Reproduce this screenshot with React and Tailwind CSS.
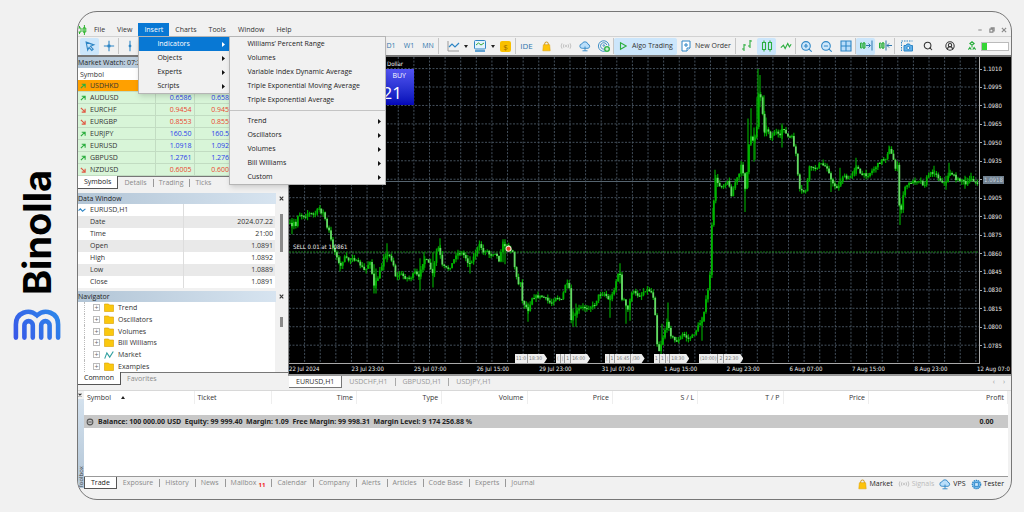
import {
  CircleUserRound,
  Search,
  ZoomIn,
  ZoomOut,
} from 'lucide-react'

const MENU = ['File', 'View', 'Insert', 'Charts', 'Tools', 'Window', 'Help']
const INSERT_ITEMS = ['Indicators', 'Objects', 'Experts', 'Scripts']
const INDICATORS = [
  'Williams’ Percent Range',
  'Volumes',
  'Variable Index Dynamic Average',
  'Triple Exponential Moving Average',
  'Triple Exponential Average',
]
const INDICATOR_GROUPS = ['Trend', 'Oscillators', 'Volumes', 'Bill Williams', 'Custom']

const QUOTES = [
  { symbol: 'USDHKD', bid: '', ask: '', up: true, selected: true },
  { symbol: 'AUDUSD', bid: '0.6586', ask: '0.6589', up: true },
  { symbol: 'EURCHF', bid: '0.9454', ask: '0.9457', up: false },
  { symbol: 'EURGBP', bid: '0.8553', ask: '0.8556', up: false },
  { symbol: 'EURJPY', bid: '160.50', ask: '160.53', up: true },
  { symbol: 'EURUSD', bid: '1.0918', ask: '1.0921', up: true },
  { symbol: 'GBPUSD', bid: '1.2761', ask: '1.2764', up: true },
  { symbol: 'NZDUSD', bid: '0.6005', ask: '0.6008', up: false },
]

const DATA_ROWS = [
  ['Date', '2024.07.22'],
  ['Time', '21:00'],
  ['Open', '1.0891'],
  ['High', '1.0892'],
  ['Low', '1.0889'],
  ['Close', '1.0891'],
]

const TREE = ['Trend', 'Oscillators', 'Volumes', 'Bill Williams', 'Market', 'Examples']

const PRICES = [
  '1.1010', '1.0995', '1.0980', '1.0965', '1.0950', '1.0935', '1.0920', '1.0905',
  '1.0890', '1.0875', '1.0860', '1.0845', '1.0830', '1.0815', '1.0800', '1.0785',
]
const TIMES = [
  '22 Jul 2024', '23 Jul 23:00', '25 Jul 07:00', '26 Jul 15:00', '29 Jul 23:00', '31 Jul 07:00',
  '1 Aug 15:00', '2 Aug 23:00', '6 Aug 07:00', '7 Aug 15:00', '8 Aug 23:00',
]

const EVENTS = [
  { at: 226, parts: ['11:0', '18:30'] },
  { at: 267, parts: ['(', '|', '1', '16:00'] },
  { at: 316, parts: ['|', '1', '16:45', '/30'] },
  { at: 365, parts: ['1', '1', '|', '18:30'] },
  { at: 410, parts: ['(10:00)', '2', '22:30'] },
]

const TRADE_COLUMNS = [
  { name: 'Symbol', cls: 'w-[110px] text-left' },
  { name: 'Ticket', cls: 'w-[77px] text-left' },
  { name: 'Time', cls: 'text-right' },
  { name: 'Type', cls: 'text-right' },
  { name: 'Volume', cls: 'text-right' },
  { name: 'Price', cls: 'text-right' },
  { name: 'S / L', cls: 'text-right' },
  { name: 'T / P', cls: 'text-right' },
  { name: 'Price', cls: 'text-right' },
  { name: 'Profit', cls: 'w-[139px] text-right' },
]
const TOOLBOX_TABS = [
  'Exposure', 'History', 'News', 'Mailbox', 'Calendar', 'Company',
  'Alerts', 'Articles', 'Code Base', 'Experts', 'Journal',
]

// Price track in plot units (690 x 304)
const TRACK = [
  [0, 165], [3, 169], [5, 164], [7, 168], [9, 156], [12, 157], [16, 158], [19, 155], [22, 156],
  [26, 156], [30, 150], [32, 154], [35, 155], [38, 170], [41, 174], [42, 182], [45, 192], [48, 198],
  [51, 210], [55, 199], [60, 202], [63, 198], [67, 203], [71, 206], [76, 213], [81, 202], [85, 228],
  [89, 219], [94, 204], [95, 196], [101, 198], [104, 204], [107, 220], [111, 215], [116, 219],
  [121, 220], [126, 214], [131, 221], [132, 208], [136, 200], [140, 206], [144, 217], [147, 194],
  [150, 189], [153, 207], [157, 210], [160, 210], [164, 204], [167, 196], [172, 194], [176, 198],
  [180, 206], [184, 200], [189, 189], [192, 185], [193, 196], [197, 191], [201, 197], [206, 194],
  [210, 202], [213, 187], [216, 187], [220, 189], [224, 194], [226, 212], [229, 226], [232, 222],
  [233, 242], [236, 246], [239, 252], [243, 239], [246, 238], [254, 238], [262, 245], [267, 238],
  [273, 242], [276, 226], [280, 226], [282, 262], [285, 257], [291, 249], [298, 249], [305, 247],
  [310, 236], [316, 235], [320, 242], [324, 235], [327, 223], [330, 212], [332, 222], [333, 240],
  [336, 242], [338, 255], [341, 242], [343, 232], [347, 236], [352, 237], [356, 231], [361, 232],
  [364, 236], [367, 262], [368, 284], [370, 292], [373, 282], [377, 267], [379, 262], [381, 275],
  [386, 282], [389, 282], [394, 275], [399, 280], [404, 277], [408, 270], [411, 264], [413, 262],
  [416, 247], [420, 227], [422, 202], [423, 162], [425, 142], [427, 116], [429, 128], [434, 128],
  [439, 122], [442, 138], [446, 125], [450, 117], [453, 105], [455, 122], [457, 137], [459, 92],
  [462, 80], [465, 84], [468, 67], [470, 32], [473, 47], [475, 74], [479, 72], [482, 81], [486, 73],
  [491, 80], [494, 68], [498, 79], [503, 80], [507, 97], [510, 132], [514, 134], [517, 132],
  [521, 107], [525, 112], [531, 106], [539, 110], [543, 126], [549, 130], [554, 118], [559, 122],
  [564, 114], [568, 107], [571, 117], [579, 117], [586, 110], [592, 103], [597, 100], [600, 91],
  [604, 100], [607, 112], [609, 107], [610, 147], [612, 154], [614, 137], [617, 128], [623, 124],
  [631, 122], [635, 128], [639, 117], [645, 114], [651, 122], [657, 126], [660, 114], [663, 116],
  [668, 122], [673, 122], [677, 127], [682, 120], [689, 127],
]

// Long wicks: x, top, bottom
const SPIKES = [
  [3, 160, 176], [31, 147, 154], [51, 198, 213], [85, 206, 235], [87, 210, 235], [98, 185, 204],
  [131, 200, 232], [135, 194, 212], [144, 194, 229], [151, 180, 197], [181, 198, 215],
  [214, 181, 204], [216, 181, 206], [239, 244, 263], [284, 250, 268], [287, 245, 268],
  [321, 236, 259], [331, 205, 225], [337, 245, 265], [341, 240, 262], [379, 244, 266],
  [373, 265, 286], [413, 258, 282], [424, 150, 162], [426, 112, 140], [456, 118, 154],
  [459, 61, 130], [462, 51, 84], [465, 70, 104], [466, 78, 102], [468, 40, 70], [469, 12, 60],
  [471, 18, 50], [475, 38, 74], [477, 60, 76], [493, 66, 90], [542, 118, 134], [551, 110, 126],
  [567, 100, 118], [600, 88, 96], [611, 140, 167], [645, 108, 116], [657, 118, 132],
  [660, 105, 120], [676, 118, 131], [682, 115, 124],
]

function buildCandles() {
  let seed = 7
  const rnd = () => {
    seed = (seed * 16807) % 2147483647
    return seed / 2147483647
  }
  const candles = []
  let k = 0
  let prev = TRACK[0][1]
  for (let x = 1; x < 689; x += 1.953) {
    while (k < TRACK.length - 2 && TRACK[k + 1][0] < x) k++
    const [x0, y0] = TRACK[k]
    const [x1, y1] = TRACK[k + 1]
    const close = y0 + ((y1 - y0) * (x - x0)) / (x1 - x0) + (rnd() - 0.5) * 3
    const top = Math.min(prev, close)
    const bottom = Math.max(prev, close)
    candles.push({
      x,
      top,
      bottom: Math.max(bottom, top + 1),
      high: top - rnd() * 4,
      low: bottom + rnd() * 4,
      bear: close > prev,
    })
    prev = close
  }
  return candles
}

const CANDLES = buildCandles()

function Sep() {
  return <span className="h-4 w-px shrink-0 bg-[#c6c6c6]" />
}

function Tool({ label, active, className = 'w-[19px]', children }) {
  return (
    <button
      aria-label={label}
      className={`h-[17px] shrink-0 flex items-center justify-center rounded-xs ${className} ${active ? 'bg-[#cce6fb]' : ''}`}
    >
      {children}
    </button>
  )
}

function Caret() {
  return (
    <svg viewBox="0 0 4 3" className="w-1 h-[3px] shrink-0">
      <path d="M0 0h4L2 3z" fill="#222" />
    </svg>
  )
}

function MenuArrow({ light }) {
  return (
    <svg viewBox="0 0 3 5" className="w-[3px] h-[5px]">
      <path d="M0 0l3 2.5L0 5z" fill={light ? '#fff' : '#111'} />
    </svg>
  )
}

function BagIcon() {
  return (
    <svg viewBox="1 0 10 12" className="w-[9px] h-[11px] shrink-0">
      <path d="M4 5V3a2 2 0 0 1 4 0v2" fill="none" stroke="#c98a00" />
      <path d="M2.5 4h7l.6 6.8H1.9z" fill="#fdc30a" stroke="#e0a000" strokeWidth=".6" />
    </svg>
  )
}

function CloudIcon() {
  return (
    <svg viewBox="0 0 12 12" className="w-3 h-3 shrink-0" fill="#b9defa" stroke="#2f86c5" strokeWidth=".9">
      <path d="M3.2 8.3a2.2 2.2 0 0 1-.3-4.4A3.2 3.2 0 0 1 9 4.2a2.1 2.1 0 0 1 0 4.1z" />
      <path d="M6 6.5v4.2M3.5 10.8h5" fill="none" />
    </svg>
  )
}

function SignalIcon() {
  return (
    <svg viewBox="0 0 12 12" className="w-3 h-3 shrink-0" fill="none" stroke="#bdbdbd" strokeWidth=".9">
      <circle cx="6" cy="6" r=".8" />
      <path d="M4 4.2a3 3 0 0 0 0 3.6M8 4.2a3 3 0 0 1 0 3.6M2 3.3a5 5 0 0 0 0 5.4M10 3.3a5 5 0 0 1 0 5.4" />
    </svg>
  )
}

function Stroke({ d, color = '#2f86c5', className = 'w-3.5 h-3.5', fill = 'none' }) {
  return (
    <svg viewBox="0 0 14 14" className={className} fill={fill} stroke={color} strokeWidth="1.1">
      <path d={d} vectorEffect="non-scaling-stroke" />
    </svg>
  )
}

function Brand() {
  return (
    <aside className="w-[77px] pr-[3px] shrink-0 flex flex-col items-center justify-center gap-3.5">
      <h1 className="[writing-mode:vertical-rl] rotate-180 font-['Inter','Liberation_Sans',sans-serif] text-[38px] leading-[44px] font-bold text-black">
        Binolla
      </h1>
      <svg viewBox="0 0 48 32" className="w-12 h-8" fill="none" strokeWidth="4.6" strokeLinecap="round">
        <defs>
          <linearGradient id="brand" x1="0" y1="32" x2="48" y2="0" gradientUnits="userSpaceOnUse">
            <stop offset="0" stopColor="#3a55e8" />
            <stop offset="1" stopColor="#2b8bea" />
          </linearGradient>
        </defs>
        <g stroke="url(#brand)">
          <path d="M2.9 28.6V15.5C2.9 3.5 16 -.8 24 6.4 32 -.8 45.1 3.5 45.1 15.5V28.6" />
          <path d="M11.4 28.6V16.3a4.1 4.1 0 0 1 8.4 0V28.6" />
          <path d="M28.2 28.6V16.3a4.1 4.1 0 0 1 8.4 0V28.6" />
        </g>
      </svg>
    </aside>
  )
}

function InsertMenu() {
  return (
    <div className="absolute z-20 left-0 top-full w-[92px] bg-[#f1f1f1] border border-[#b5b5b5] shadow-md text-[#222]">
      {INSERT_ITEMS.map((item, i) => (
        <button
          key={item}
          className={`w-full h-3.5 flex items-center justify-between pl-[18px] pr-1 ${i === 0 ? 'bg-[#0878d4] text-white' : ''}`}
        >
          {item}
          <MenuArrow light={i === 0} />
        </button>
      ))}
      <div className="absolute left-full -top-px w-[157px] bg-[#f1f1f1] border border-[#b5b5b5] shadow-md">
        {INDICATORS.map((item) => (
          <button key={item} className="w-full h-3.5 flex items-center pl-[17px] whitespace-nowrap">
            {item}
          </button>
        ))}
        <hr className="my-[3px] border-[#c4c4c4]" />
        {INDICATOR_GROUPS.map((item) => (
          <button key={item} className="w-full h-3.5 flex items-center justify-between pl-[17px] pr-1">
            {item}
            <MenuArrow />
          </button>
        ))}
      </div>
    </div>
  )
}

function MenuBar() {
  return (
    <div className="pt-[11px] flex items-center justify-between">
      <nav className="flex items-center h-[13px]">
        <svg viewBox="0 0 9 10" className="w-[9px] h-2.5 mr-px" fill="none" stroke="#2eb52e">
          <path d="M.5 3h2.5v4H.5M6.2 2v6M5 3h2.8v4H5zM6.4 0v3M6.4 7v3M1.5 1v2M1.5 7v2" />
        </svg>
        {MENU.map((item) => (
          <div key={item} className="relative">
            <button className={`h-[13px] px-1.5 flex items-center ${item === 'Insert' ? 'bg-[#0878d4] text-white' : 'text-[#333]'}`}>
              {item}
            </button>
            {item === 'Insert' && <InsertMenu />}
          </div>
        ))}
      </nav>
      <div className="flex gap-1.5 pr-1">
        <Stroke d="M3 7h8" color="#888" className="w-1.5 h-2" />
        <Stroke d="M2 5h7v7H2zM5 5V2h7v7H9" color="#888" className="w-1.5 h-2" />
        <Stroke d="M2 2l10 10M12 2L2 12" color="#888" className="w-1.5 h-2" />
      </div>
    </div>
  )
}

function Toolbar() {
  return (
    <div className="h-[21px] flex items-center border-t border-[#d2d2d2] border-b-2 border-b-[#777] px-0.5 text-[#333]">
      <Tool label="Cursor" active>
        <Stroke d="M2.5 2.5l9 3.2-4 1.6 3.2 3.4-1.6 1.5-3.2-3.4-1.6 3z" className="w-3 h-3" />
      </Tool>
      <Tool label="Crosshair"><Stroke d="M7 1v12M1 7h12M5.5 7a1.5 1.5 0 1 0 3 0 1.5 1.5 0 0 0-3 0" className="w-3 h-3" /></Tool>
      <Sep />
      <Tool label="Vertical line" className="w-[22px]"><Stroke d="M7 1v12M6 7a1 1 0 1 0 2 0 1 1 0 0 0-2 0" className="w-3 h-3" /></Tool>
      <span className="w-[241px] shrink-0" />
      <Tool label="Daily" className="w-[18px] text-[#2f77ad]">D1</Tool>
      <Tool label="Weekly" className="w-[18px] text-[#2f77ad]">W1</Tool>
      <Tool label="Monthly" className="w-5 text-[#2f77ad]">MN</Tool>
      <Sep />
      <Tool label="Line studies" className="w-8 gap-1 pl-1">
        <svg viewBox="0 0 14 14" className="w-3.5 h-3.5" fill="none">
          <path d="M2 2v10h11" stroke="#999" />
          <path d="M3 8l3-3 3 3 4-4" stroke="#2f86c5" strokeWidth="1.2" />
        </svg>
        <Caret />
      </Tool>
      <Tool label="Templates" className="w-[25px] gap-1">
        <svg viewBox="0 0 14 14" className="w-3.5 h-3.5">
          <rect x="1.5" y="1.5" width="11" height="8.5" rx="1" fill="#e4f3fd" stroke="#2f86c5" />
          <path d="M3 6l2.5-2 2.5 2L11 4" fill="none" stroke="#38a838" />
          <path d="M2 12h10" stroke="#2f86c5" strokeWidth="1.4" />
        </svg>
        <Caret />
      </Tool>
      <Tool label="Deposit">
        <span className="w-[11px] h-[11px] rounded-xs bg-[#f8c000] text-[8px] leading-[11px] text-[#9a6a00] text-center">$</span>
      </Tool>
      <Sep />
      <Tool label="IDE" className="w-[21px] text-[8px] text-[#2f77ad]">IDE</Tool>
      <Tool label="Market"><BagIcon /></Tool>
      <Tool label="Signals"><SignalIcon /></Tool>
      <Tool label="Virtual hosting"><CloudIcon /></Tool>
      <Tool label="Community">
        <svg viewBox="0 0 14 14" className="w-3.5 h-3.5" fill="none" stroke="#3f8fc6">
          <path d="M10 11.2A5.3 5.3 0 1 1 12 7M9 9.2A3.2 3.2 0 1 1 9.8 6" />
          <circle cx="6.8" cy="6.5" r=".8" />
          <circle cx="10" cy="10" r="3" fill="#31b54a" stroke="none" />
          <path d="M8.3 10h3.4M10 8.3v3.4" stroke="#fff" />
        </svg>
      </Tool>
      <Sep />
      <Tool label="Algo Trading" active className="w-[63px] gap-1">
        <Stroke d="M3.5 2.5l8 4.5-8 4.5z" color="#2cae3f" className="w-2.5 h-2.5" />
        Algo Trading
      </Tool>
      <Tool label="New Order" className="w-[58px] gap-1">
        <svg viewBox="0 0 10 12" className="w-2.5 h-3" fill="#fff" stroke="#2f86c5">
          <path d="M1 1h8v7l-3 3H1z" />
          <path d="M3 5h4M5 3v4M6 11V8h3" />
        </svg>
        New Order
      </Tool>
      <Sep />
      <Tool label="Bar chart" className="w-[21px]"><Stroke d="M4 5v7M2 10h2M4 6h2M10 1v8M8 7h2M10 2h2" color="#2cae3f" /></Tool>
      <Tool label="Candlesticks" active><Stroke d="M2.5 3.5h3v7h-3zM8.5 3.5h3v7h-3zM4 1.5v2M4 10.5v2M10 1.5v2M10 10.5v2" color="#2cae3f" /></Tool>
      <Tool label="Line chart"><Stroke d="M1 9l3-3 2 4 3-6 2 4 2-3" color="#2cae3f" className="w-3 h-3" /></Tool>
      <Sep />
      <Tool label="Zoom in" className="w-[21px]"><ZoomIn size={13} color="#2f86c5" fill="#cfe8fb" /></Tool>
      <Tool label="Zoom out"><ZoomOut size={13} color="#2f86c5" fill="#cfe8fb" /></Tool>
      <Tool label="Tile windows"><Stroke d="M2 2h10v10H2zM7 2v10M2 7h10" fill="#b9defa" /></Tool>
      <Sep />
      <Tool label="Auto scroll" active>
        <svg viewBox="0 0 14 14" className="w-3.5 h-3.5" fill="none">
          <path d="M1.5 4h1.5v5H1.5zM5 3v7M4 4h2v5H4z" stroke="#2cae3f" />
          <path d="M7 6.5h4M9.5 4.5l2 2-2 2M13 1.5v10" stroke="#2f77ad" />
        </svg>
      </Tool>
      <Tool label="Chart shift">
        <svg viewBox="0 0 14 14" className="w-3.5 h-3.5" fill="none">
          <path d="M1.5 4h1.5v5H1.5zM5 3v7M4 4h2v5H4z" stroke="#2cae3f" />
          <path d="M9 6.5h5M11 4.5l-2 2 2 2M8 1.5v10" stroke="#2f77ad" />
        </svg>
      </Tool>
      <Sep />
      <Tool label="Screenshot" className="w-[23px]">
        <svg viewBox="0 0 14 14" className="w-3.5 h-3.5" fill="none" stroke="#2f86c5">
          <path d="M1.5 12V2h11" strokeDasharray="1.5 1" />
          <path d="M4 6.5h2l1-1.5h2.5l1 1.5h2V12H4z" fill="#5fb0ea" />
          <circle cx="8.3" cy="9" r="1.5" fill="#fff" />
        </svg>
      </Tool>
      <Tool label="Search"><Search size={10} color="#333" strokeWidth={2.5} /></Tool>
      <Tool label="Account" className="w-[25px]"><CircleUserRound size={10} color="#333" strokeWidth={2.5} /></Tool>
      <Tool label="Connection">
        <Stroke d="M7 1l3 2.5-3 2.5-3-2.5zM7 6v3M2 12l2-3 2 3M8 12l2-3 2 3" color="#2cae3f" className="w-2.5 h-3" />
      </Tool>
      <div className="flex-1 h-[9px] border border-[#bbb] bg-white">
        <div className="w-[5px] h-full bg-[#36d636]" />
      </div>
    </div>
  )
}

function PanelTitle({ children }) {
  return (
    <div className="flex items-center justify-between pr-0.5">
      <h2 className="flex-1 h-[11px] leading-[11px] bg-linear-to-r from-[#b2c5d6] to-[#d7e4f0] text-[#222]">{children}</h2>
      <button aria-label="Close" className="w-2.5 h-2.5 flex items-center justify-center">
        <Stroke d="M2 2l10 10M12 2L2 12" color="#333" className="w-[5px] h-[5px]" />
      </button>
    </div>
  )
}

function Tabs({ active, items }) {
  return (
    <div className="flex items-start gap-px h-[14px] border-t border-[#777] text-[#8a8a8a]">
      <button className="-mt-px h-[13px] px-1.5 bg-white border-r border-b border-[#555] text-[#222]">{active}</button>
      {items.map((item, i) => (
        <button key={item} className="h-3 flex items-center">
          {i > 0 && <span className="h-2 w-px bg-[#999]" />}
          <span className="px-[5px]">{item}</span>
        </button>
      ))}
    </div>
  )
}

function MarketWatch() {
  return (
    <section>
      <PanelTitle>Market Watch: 07:2</PanelTitle>
      <table className="w-full table-fixed border-collapse leading-[11px]">
        <thead>
          <tr className="h-3 bg-white">
            <th className="w-[77px] p-0 pl-0.5 text-left font-normal text-[#333]">Symbol</th>
            <th className="w-[39px] p-0" />
            <th className="w-[39px] p-0" />
            <th className="p-0" />
          </tr>
        </thead>
        <tbody>
          {QUOTES.map((q) => (
            <tr key={q.symbol} className={`border-b border-[#c2dcc2] ${q.selected ? 'bg-[#ffa000]' : 'bg-[#d8f5d8]'}`}>
              <td className="p-0 text-[#333]">
                <span className="flex items-center gap-1 pl-0.5">
                  <Stroke
                    d={q.up ? 'M2 12L11 3M4 3h8v8' : 'M2 2l9 9M4 12h8V4'}
                    color={q.up ? '#2cae3f' : '#e05540'}
                    className="w-1.5 h-1.5"
                  />
                  {q.symbol}
                </span>
              </td>
              <td className={`p-0 pr-0.5 text-right border-l border-[#c2dcc2] ${q.up ? 'text-[#2a40ea]' : 'text-[#ea4530]'}`}>{q.bid}</td>
              <td className={`p-0 text-right border-l border-[#c2dcc2] ${q.up ? 'text-[#2a40ea]' : 'text-[#ea4530]'}`}>{q.ask}</td>
              <td className="p-0" />
            </tr>
          ))}
        </tbody>
      </table>
      <Tabs active="Symbols" items={['Details', 'Trading', 'Ticks']} />
    </section>
  )
}

function DataWindow() {
  return (
    <section>
      <PanelTitle>Data Window</PanelTitle>
      <div className="flex">
        <table className="flex-1 table-fixed border-collapse bg-white text-[#333]">
          <tbody>
            <tr className="h-3">
              <th className="w-[105px] p-0 text-left font-normal border-r border-[#ddd]">
                <span className="flex items-center gap-1">
                  <Stroke d="M1 8l3-3 4 4 5-4" className="w-2 h-2" />
                  EURUSD,H1
                </span>
              </th>
              <td className="p-0" />
            </tr>
            {DATA_ROWS.map(([name, value]) => (
              <tr key={name} className="h-3 odd:bg-white even:bg-[#e9e9e9]">
                <th className="w-[105px] p-0 pl-3 text-left font-normal border-r border-[#ddd]">{name}</th>
                <td className="p-0 pr-0.5 text-right">{value}</td>
              </tr>
            ))}
          </tbody>
        </table>
        <div className="w-[13px] flex justify-center pt-2.5">
          <span className="w-[3px] h-[38px] bg-[#8a8a8a]" />
        </div>
      </div>
    </section>
  )
}

function Navigator() {
  return (
    <section className="flex-1 flex flex-col">
      <PanelTitle>Navigator</PanelTitle>
      <div className="flex-1 flex">
        <ul className="flex-1 flex flex-col pl-1.5 bg-white leading-[11px] text-[#333]">
          {TREE.map((item) => (
            <li key={item} className="flex-1 flex items-center gap-1 border-l border-dotted border-[#bbb] pl-2">
              <span className="w-[7px] h-[7px] text-[7px] leading-[6px] text-center border border-[#bbb] text-[#666]">+</span>
              {item === 'Market' ? (
                <Stroke d="M1 12l3-8 4 6 5-8" className="w-2.5 h-2.5" color="#2f9f9f" />
              ) : (
                <svg viewBox="0 0 10 9" className="w-2.5 h-[9px]">
                  <path d="M.5 1h4l1 1h4v6.5h-9z" fill="#fac80f" stroke="#d99e00" strokeWidth=".6" />
                </svg>
              )}
              {item}
            </li>
          ))}
        </ul>
        <div className="w-[13px] flex justify-center pt-[15px]">
          <span className="w-[3px] h-2.5 bg-[#8a8a8a]" />
        </div>
      </div>
      <Tabs active="Common" items={['Favorites']} />
    </section>
  )
}

function Plot() {
  const columns = Array.from({ length: 45 }, (_, i) => i * 15.61)
  const rows = PRICES.map((_, i) => 11.5 + i * 18.32)
  return (
    <svg viewBox="0 0 690 304" preserveAspectRatio="none" className="absolute inset-0 w-full h-full">
      <g stroke="#4a5865" strokeWidth=".9" strokeDasharray="2 1.5">
        {columns.map((x) => <path key={x} d={`M${x} 0V304`} />)}
        {rows.map((y) => <path key={y} d={`M0 ${y}H690`} />)}
      </g>
      <path d="M0 123.7H690" stroke="#56646f" />
      <path d="M0 193.7H690" stroke="#188018" strokeDasharray="2 1" />
      <g stroke="#00a400" strokeWidth="1.2">
        {SPIKES.map(([x, top, bottom]) => <path key={`${x}-${top}`} d={`M${x} ${top}V${bottom}`} />)}
        {CANDLES.map((c) => <path key={c.x} d={`M${c.x} ${c.high}V${c.low}`} />)}
      </g>
      {CANDLES.map((c) => (
        <rect key={c.x} x={c.x - 0.9} y={c.top} width="1.8" height={c.bottom - c.top} fill={c.bear ? '#66d866' : '#00b400'} />
      ))}
      <circle cx="219.5" cy="190.5" r="3" fill="#f5e6d8" />
      <circle cx="219.5" cy="190.5" r="2" fill="#e0442a" />
    </svg>
  )
}

function Chart() {
  return (
    <section className="flex-1 min-w-0 flex flex-col">
      <div className="flex-1 flex flex-col bg-black border-l border-[#888] border-b-2 border-b-[#999] font-['DejaVu_Sans_Condensed','DejaVu_Sans',sans-serif] text-[6px] leading-[8px] text-[#eee]">
        <div className="flex-1 flex">
          <div className="relative flex-1 overflow-hidden border-r border-b border-[#aaa]">
            <Plot />
            <p className="absolute left-[98px] top-[3px]">Dollar</p>
            <button className="absolute left-[84px] top-3 w-[41px] h-9 flex flex-col items-end pr-2 bg-linear-to-b from-[#5353f2] to-[#0505b8] font-['Open_Sans',sans-serif] text-white">
              <span className="text-[7px] leading-[13px]">BUY</span>
              <span className="pr-1 text-[17px] leading-[22px]">21</span>
            </button>
            <p className="absolute left-1 top-[186px]">SELL 0.01 at 1.0861</p>
            {EVENTS.map((e) => (
              <div
                key={e.at}
                className="absolute bottom-0 flex h-[9px] pr-1 bg-[#eee] text-[5px] leading-[9px] text-[#777] divide-x divide-[#999] [clip-path:polygon(0_0,calc(100%-3px)_0,100%_50%,calc(100%-3px)_100%,0_100%)]"
                style={{ left: `${(e.at / 690) * 100}%` }}
              >
                {e.parts.map((part, i) => <span key={i} className="px-px">{part}</span>)}
              </div>
            ))}
          </div>
          <ol className="relative w-[31px] shrink-0 flex flex-col justify-between pt-2 pb-[14px]">
            {PRICES.map((p) => (
              <li key={p} className="flex items-center gap-px">
                <span className="w-0.5 h-px bg-[#aaa]" />
                {p === '1.0920' ? (
                  <span className="px-px bg-[#70808f] text-[#c5d0da]">1.0918</span>
                ) : p}
              </li>
            ))}
          </ol>
        </div>
        <ol className="flex h-[10px] leading-[10px] whitespace-nowrap">
          {TIMES.map((t) => (
            <li key={t} className="flex-1 w-0">{t}</li>
          ))}
          <li className="w-[34px] shrink-0">12 Aug 07:0</li>
        </ol>
      </div>
      <div className="flex items-start justify-between h-[14px] pl-px text-[#999]">
        <div className="flex items-center">
          <button className="h-3 px-[7px] bg-white border-r border-b border-[#777] text-[#333]">EURUSD,H1</button>
          {['USDCHF,H1', 'GBPUSD,H1', 'USDJPY,H1'].map((s, i) => (
            <button key={s} className="flex items-center">
              {i > 0 && <span className="h-2 w-px bg-[#aaa]" />}
              <span className="px-[7px]">{s}</span>
            </button>
          ))}
        </div>
        <div className="flex gap-2 pr-1.5">
          <button aria-label="Previous">‹</button>
          <button aria-label="Next">›</button>
        </div>
      </div>
    </section>
  )
}

function Toolbox() {
  return (
    <section className="h-[109px] shrink-0 flex border-t border-[#d8d8d8]">
      <div className="w-1.5 mb-[11px] flex flex-col items-center justify-between bg-linear-to-b from-[#d7e4f0] to-[#b2c5d6]">
        <button aria-label="Close" className="w-1.5 h-2 bg-[#f1f1f1] flex items-center">
          <Stroke d="M2 2l10 10M12 2L2 12" color="#333" className="w-1 h-1" />
        </button>
        <h2 className="[writing-mode:vertical-rl] rotate-180 text-[6px] leading-[6px] text-[#444]">Toolbox</h2>
      </div>
      <div className="flex-1 min-w-0 flex flex-col">
        <div className="flex-1 mr-[3px] bg-white border-b border-[#999]">
          <table className="w-full table-fixed border-collapse text-[#333]">
            <thead>
              <tr className="h-[13px]">
                {TRADE_COLUMNS.map((c, i) => (
                  <th key={i} className={`p-0 px-[3px] font-normal border-r border-[#eee] ${c.cls}`}>
                    {c.name}
                    {i === 0 && (
                      <svg viewBox="0 0 4 3" className="ml-2.5 inline w-1 h-[3px]">
                        <path d="M0 3h4L2 0z" fill="#222" />
                      </svg>
                    )}
                  </th>
                ))}
              </tr>
            </thead>
            <tbody>
              <tr className="h-[11px]"><td colSpan={10} className="p-0" /></tr>
              <tr className="h-[13px] bg-[#c8c8c8] font-['Noto_Sans',sans-serif] font-bold text-[#222]">
                <td colSpan={9} className="p-0 pl-0.5">
                  <span className="flex items-center gap-1 whitespace-pre">
                    <Stroke d="M2 7a5 5 0 1 0 10 0 5 5 0 0 0-10 0M4 7h6" color="#555" className="w-2 h-2" />
                    {'Balance: 100 000.00 USD  Equity: 99 999.40  Margin: 1.09  Free Margin: 99 998.31  Margin Level: 9 174 256.88 %'}
                  </span>
                </td>
                <td className="p-0 pr-3.5 text-right">0.00</td>
              </tr>
            </tbody>
          </table>
        </div>
        <div className="h-[22px] flex items-start justify-between text-[#8a8a8a]">
          <div className="flex items-center gap-px">
            <button className="-mt-px h-3 px-1.5 bg-white border-x border-b border-[#555] text-[#222]">Trade</button>
            {TOOLBOX_TABS.map((tab, i) => (
              <button key={tab} className="flex items-center">
                {i > 0 && <span className="h-2 w-px bg-[#999]" />}
                <span className="px-[5px]">
                  {tab}
                  {tab === 'Mailbox' && <sub className="pl-0.5 text-[6px] leading-none font-bold text-[#f02020]">11</sub>}
                </span>
              </button>
            ))}
          </div>
          <div className="flex items-center gap-[5px] pr-[7px] pt-px text-[#222]">
            <button className="flex items-center gap-0.5"><BagIcon />Market</button>
            <button className="flex items-center gap-0.5 text-[#bbb]"><SignalIcon />Signals</button>
            <button className="flex items-center gap-0.5"><CloudIcon />VPS</button>
            <button className="flex items-center gap-0.5">
              <svg viewBox="0 0 12 12" className="w-[11px] h-[11px]" stroke="#2f86c5">
                <circle cx="6" cy="6" r="4.5" fill="#7cc0f2" strokeDasharray="1.5 .7" strokeWidth="1.5" />
                <rect x="4" y="4" width="4" height="4" fill="#cfe8fb" />
              </svg>
              Tester
            </button>
          </div>
        </div>
      </div>
    </section>
  )
}

export default function App() {
  return (
    <div className="h-screen flex bg-[#f1f1f1] pt-[11px] pb-3 pr-3 font-['Open_Sans','Noto_Sans',sans-serif] text-[7px] leading-[12px]">
      <Brand />
      <main className="flex-1 min-w-0 flex flex-col overflow-hidden rounded-[20px] border border-[#777]">
        <MenuBar />
        <Toolbar />
        <div className="flex-1 min-h-0 flex">
          <div className="w-[210px] shrink-0 flex flex-col gap-[3px] pb-1">
            <MarketWatch />
            <DataWindow />
            <Navigator />
          </div>
          <Chart />
        </div>
        <Toolbox />
      </main>
    </div>
  )
}
